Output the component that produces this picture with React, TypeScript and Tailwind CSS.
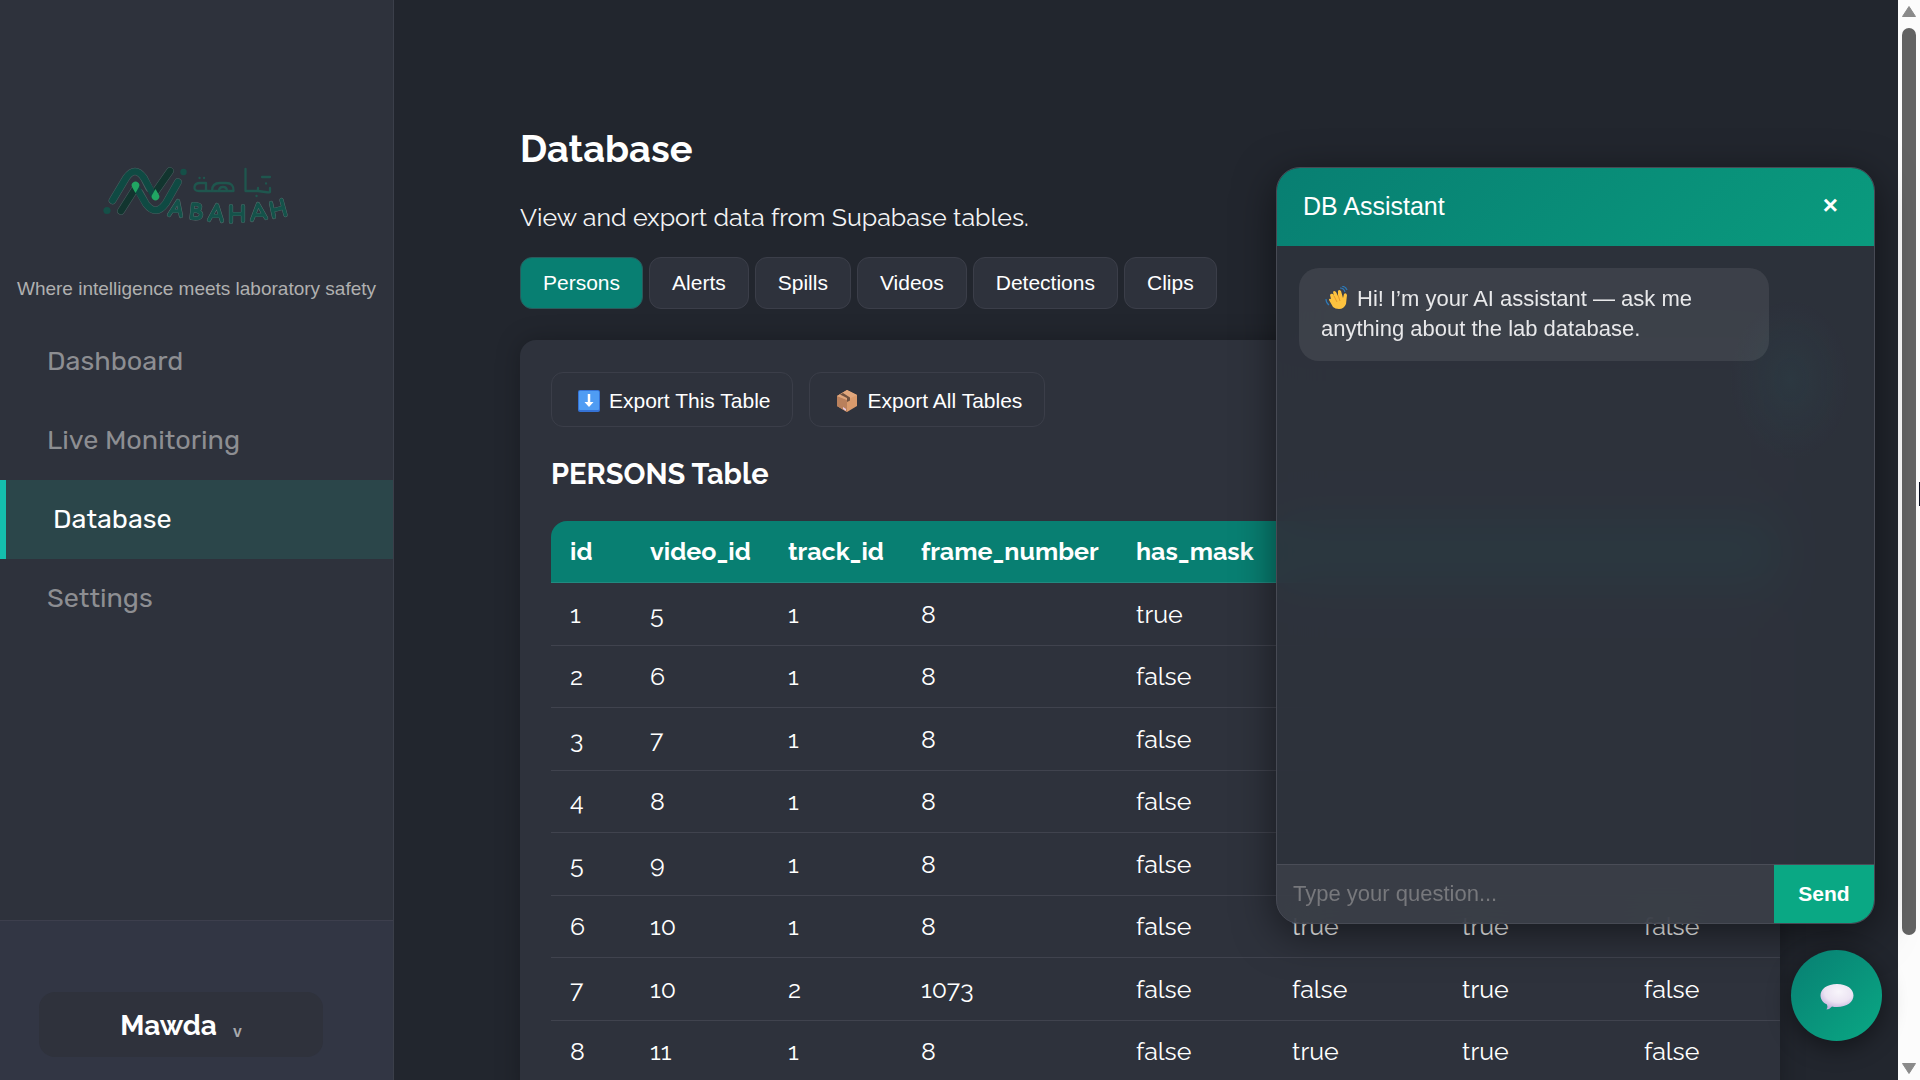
import React from "react";

const navItems = ["Dashboard", "Live Monitoring", "Database", "Settings"];
const tabs = ["Persons", "Alerts", "Spills", "Videos", "Detections", "Clips"];
const columns = ["id", "video_id", "track_id", "frame_number", "has_mask", "", "", ""];
const rows = [
  ["1", "5", "1", "8", "true", "", "", ""],
  ["2", "6", "1", "8", "false", "", "", ""],
  ["3", "7", "1", "8", "false", "", "", ""],
  ["4", "8", "1", "8", "false", "", "", ""],
  ["5", "9", "1", "8", "false", "", "", ""],
  ["6", "10", "1", "8", "false", "true", "true", "false"],
  ["7", "10", "2", "1073", "false", "false", "true", "false"],
  ["8", "11", "1", "8", "false", "true", "true", "false"],
];

function LogoLettering() {
  return (
    <>
      <path d="M79 65 L88 51 L91 66 M83 61 h7" />
      <path d="M101.500 68 L103 54 q8 0 7 3.500 q0 3 -6 3 q8 1 7 5 q-1 4 -9.500 2.500" />
      <path d="M119 70 L127 55 L132 71 M122 66 h8" />
      <path d="M141 56 V72 M153 56 V71 M141 64 h12" />
      <path d="M162 70 L168 54 L176 68 M165 65 h8" />
      <path d="M181 53 L184 67 M191.500 50 L195.500 65 M182.500 60.500 l11 -3" />
    </>
  );
}

function Logo() {
  return (
    <svg viewBox="12 14 190 64" className="h-16 w-[190px]" role="img" aria-label="Nabahah">
      <g fill="none" strokeLinecap="round" strokeLinejoin="round">
        <g stroke="#4b6162" strokeWidth="7.600">
          <path d="M31 61 L45 39" />
          <path d="M66 41 L80 21" />
          <path d="M22.500 50.500 L36 28 Q45 15 54 28 L59 38 M50 43 L56 54 Q66 67 76 53 L88 32" />
        </g>
        <path d="M31 61 L45 39" stroke="#12352f" strokeWidth="6.600" />
        <path d="M66 41 L80 21" stroke="#12352f" strokeWidth="6.600" />
        <path d="M22.500 50.500 L36 28 Q45 15 54 28 L64 46" stroke="#0f4a43" strokeWidth="6.600" />
        <path d="M46 37 L56 54 Q66 67 76 53 L88 32" stroke="#0f4a43" strokeWidth="6.600" />
      </g>
      <circle cx="17" cy="60.500" r="3.600" fill="#155048" />
      <circle cx="93.500" cy="22" r="3.200" fill="#155048" />
      <path d="M45.500 43 L42.300 37.500 A3.800 3.800 0 1 1 48.700 37.500 Z" fill="#21a663" />
      <path d="M65.500 39 L68.700 44.500 A3.800 3.800 0 1 1 62.300 44.500 Z" fill="#21a663" />
      <g fill="none" stroke="#1f564e" strokeWidth="2.300" strokeLinecap="round" strokeLinejoin="round">
        <path d="M143 41 H109 Q104 41 104.500 37 Q105 33 110 33 H116 V41" />
        <path d="M109.500 28 h0.100 M114 28 h0.100" />
        <path d="M122 41 Q122 33 130 33 H136 Q144 33 143.500 41 M129 41 Q129 37 133 37 Q137 37 137 41" />
        <path d="M155.500 19 V41 H168 V38 M166.500 46 h0.100 M168 41 Q180 43 180 42 V38 M176 33.500 h0.100 M172 27 h8" />
      </g>
      <g fill="none" strokeLinecap="round" strokeLinejoin="round">
        <g stroke="#5d7574" strokeWidth="4.200">
          <LogoLettering />
        </g>
        <g stroke="#14524a" strokeWidth="3.400">
          <LogoLettering />
        </g>
      </g>
    </svg>
  );
}

function DownIcon() {
  return (
    <svg viewBox="0 0 22 22" className="size-[22px]" aria-hidden="true">
      <rect width="22" height="22" rx="2" fill="#3573d6" />
      <rect x="1" y="1" width="20" height="19" rx="1" fill="#4f9cf3" />
      <path d="M11 4v11" stroke="#fff" strokeWidth="2.500" fill="none" />
      <path d="M6.500 12 h9 L11 17 Z" fill="#fff" />
    </svg>
  );
}

function BoxIcon() {
  return (
    <svg viewBox="0 0 22 22" className="size-[22px]" aria-hidden="true">
      <path d="M11 0 L21 5 V16 L11 22 L1 16 V6 Z" fill="#d99a6c" />
      <path d="M1 6 L11 10 V22 L1 16 Z" fill="#b9805c" />
      <path d="M11 0 L21 5 L11 10 L1 6 Z" fill="#e0a67c" />
      <path d="M4 4.500 L11 8 V12 L14 10.500 V7.500 L7 3 Z" fill="#70513f" />
      <path d="M7 17 l3 2 v2 l-3 -2 Z" fill="#e6c8e0" />
    </svg>
  );
}

function WaveIcon() {
  return (
    <svg viewBox="0 0 24 24" className="mr-2 ml-1 inline-block size-6 align-[-4px]" aria-hidden="true">
      <path d="M8 21 L4 14 Q4 12 6 13 L5 9 Q6 7 8 8 L9 10 L8 6 Q9 4 11 6 L13 10 L13 5 Q14 3 16 5 L18 12 L19 8 Q21 6 22 9 L21 18 Q19 23 14 23 Q10 23 8 21 Z" fill="#fdc23f" />
      <path d="M9 10 l3 6 M13 9 l2 6" stroke="#e79a2d" fill="none" />
      <path d="M15 2 q4 0 5 4 M17 0 q4 1 5 4 M1 13 q0 4 3 6" stroke="#2d79b8" strokeWidth="1.200" fill="none" />
    </svg>
  );
}

function ChatIcon() {
  return (
    <svg viewBox="0 0 36 28" className="h-7 w-9" aria-hidden="true">
      <defs>
        <radialGradient id="bubble" cx="0.550" cy="0.300" r="0.700">
          <stop offset="0" stopColor="#f8f5fb" />
          <stop offset="0.600" stopColor="#ece4f3" />
          <stop offset="1" stopColor="#c3b0dc" />
        </radialGradient>
      </defs>
      <path d="M18 2 C28 2 34.500 7 34.500 13.500 C34.500 20 28 25 18 25 Q15 25 13 24.500 Q11 27 7.500 27.500 Q9 24 8 22.500 C4 21 1.500 17 1.500 13.500 C1.500 7 8 2 18 2 Z" fill="url(#bubble)" />
    </svg>
  );
}

function Sidebar() {
  return (
    <aside className="flex w-[394px] shrink-0 flex-col border-r border-[#3b3f4a] bg-[#2e323c]">
      <div className="flex flex-col items-center pt-[164px]">
        <Logo />
        <p className="mt-[47px] text-[19px] leading-7 whitespace-nowrap text-[#b0b0b0]">
          Where intelligence meets laboratory safety
        </p>
      </div>
      <nav className="mt-[19px] flex flex-col font-['Rubik','Roboto',sans-serif] text-[27px] leading-[79px]">
        {navItems.map((item) =>
          item === "Database" ? (
            <a key={item} href="#" aria-current="page" className="border-l-[6px] border-[#14bfad] bg-[#2b464a] pl-[47px] text-white">
              {item}
            </a>
          ) : (
            <a key={item} href="#" className="pl-[47px] text-[#8d8e92]">
              {item}
            </a>
          ),
        )}
      </nav>
      <div className="mt-auto h-40 border-t border-[#3d3f4d] bg-[#323644] px-[39px] pt-[71px]">
        <button className="flex h-[65px] w-[284px] items-center justify-center gap-4 rounded-2xl bg-[#2f323c] pt-0.5 font-['Raleway','Lato',sans-serif] text-[28px] font-bold text-white">
          Mawda
          <span className="pt-3 text-base text-[#a8a9ad]">v</span>
        </button>
      </div>
    </aside>
  );
}

function DataTable() {
  return (
    <table className="w-full table-fixed border-collapse text-left text-[25px] text-white">
      <colgroup>
        <col className="w-[80px]" />
        <col className="w-[138px]" />
        <col className="w-[133px]" />
        <col className="w-[215px]" />
        <col className="w-[156px]" />
        <col className="w-[170px]" />
        <col className="w-[182px]" />
        <col />
      </colgroup>
      <thead>
        <tr className="h-[61px] bg-[#087f72]">
          {columns.map((c, i) => (
            <th key={i} scope="col" className="border-b border-[#218a80] pl-[19px] font-bold first:rounded-tl-2xl">
              {c}
            </th>
          ))}
        </tr>
      </thead>
      <tbody>
        {rows.map((r, i) => (
          <tr key={i} className="h-[62px] border-b border-[#40434e] odd:h-[63px]">
            {r.map((v, j) => (
              <td key={j} className="pt-0.5 pl-[19px]">
                {v}
              </td>
            ))}
          </tr>
        ))}
      </tbody>
    </table>
  );
}

function Assistant() {
  return (
    <section className="absolute top-[167px] right-[45px] flex h-[757px] w-[599px] flex-col overflow-hidden rounded-3xl border border-[#474a54] bg-[#2e323c]/92 shadow-[0_10px_40px_rgba(0,0,0,0.5)] backdrop-blur-xl">
      <header className="flex h-[78px] shrink-0 items-center justify-between bg-linear-135 from-[#087f72] to-[#0a9b7e] pr-9 pl-[26px] text-white">
        <h2 className="text-[25px]">DB Assistant</h2>
        <button aria-label="Close" className="pb-1 text-[26px] font-bold">
          ×
        </button>
      </header>
      <div className="grow bg-[radial-gradient(60px_80px_at_513px_134px,#2c3841,transparent)] p-[22px]">
        <p className="w-[470px] rounded-[20px] bg-white/8 px-[22px] pt-4 pb-[17px] text-[22px] leading-[30px] text-[#e8e8ea]">
          <WaveIcon />
          Hi! I’m your AI assistant — ask me anything about the lab database.
        </p>
      </div>
      <form className="flex h-[59px] shrink-0 border-t border-[#4a4d57]">
        <input
          aria-label="Question"
          placeholder="Type your question..."
          className="min-w-0 grow bg-white/6 px-4 pb-0.5 text-[22px] text-white outline-none placeholder:text-[#77787c]"
        />
        <button type="button" className="w-[100px] bg-[#0aa884] text-[21px] font-bold text-white">
          Send
        </button>
      </form>
    </section>
  );
}

function Scrollbar() {
  return (
    <div aria-hidden="true" className="flex w-[22px] shrink-0 flex-col items-center bg-[#fcfcfc] pt-1.5 pb-1.5">
      <svg viewBox="0 0 14 11" className="h-[11px] w-3.5">
        <path d="M7 0.500 L13.500 10.500 H0.500 Z" fill="#8a8a8a" stroke="#8a8a8a" strokeLinejoin="round" />
      </svg>
      <div className="mt-[11px] h-[907px] w-3.5 rounded-full bg-[#636363]" />
      <svg viewBox="0 0 14 11" className="mt-auto h-[11px] w-3.5">
        <path d="M7 10.500 L13.500 0.500 H0.500 Z" fill="#8a8a8a" stroke="#8a8a8a" strokeLinejoin="round" />
      </svg>
    </div>
  );
}

export default function App() {
  return (
    <div className="relative flex h-screen overflow-hidden bg-[#22262e] font-['Liberation_Sans',Arial,sans-serif]">
      <Sidebar />
      <main className="min-w-0 grow overflow-hidden pt-[124px] pr-[118px] pl-[126px] font-['Raleway','Lato',sans-serif]">
        <h1 className="text-[38px] leading-[50px] font-bold text-white">Database</h1>
        <p className="mt-[25px] text-[25px] leading-9 text-[#f4f4f5]">View and export data from Supabase tables.</p>
        <div className="mt-[22px] flex gap-1.5 font-['Liberation_Sans',Arial,sans-serif] text-[21px] text-white">
          {tabs.map((t, i) => (
            <button
              key={t}
              className={
                i === 0
                  ? "h-[52px] rounded-xl border border-[#2b5a5c] bg-[#087f72] px-[22px]"
                  : "h-[52px] rounded-xl border border-[#3b3e49] bg-[#2e323c] px-[22px]"
              }
            >
              {t}
            </button>
          ))}
        </div>
        <div className="mt-[31px] min-h-[760px] rounded-t-2xl bg-[#2e323c] pt-8 pl-[31px] shadow-[0_0_24px_rgba(0,0,0,0.25)]">
          <div className="flex gap-4 font-['Liberation_Sans',Arial,sans-serif] text-[21px] text-white">
            <button className="flex h-[55px] items-center gap-[9px] rounded-xl border border-[#3b3e49] pt-0.5 pr-[22px] pl-[26px]">
              <DownIcon />
              Export This Table
            </button>
            <button className="flex h-[55px] items-center gap-[9px] rounded-xl border border-[#3b3e49] pt-0.5 pr-[22px] pl-[26px]">
              <BoxIcon />
              Export All Tables
            </button>
          </div>
          <h2 className="mt-[27px] mb-[27px] text-[29px] leading-10 font-bold text-white">PERSONS Table</h2>
          <DataTable />
        </div>
      </main>
      <Scrollbar />
      <Assistant />
      <button
        aria-label="Open chat"
        className="absolute top-[950px] right-[38px] flex size-[91px] items-center justify-center rounded-full bg-linear-135 from-[#087f72] to-[#0aa884] shadow-[0_6px_24px_rgba(0,0,0,0.45)]"
      >
        <ChatIcon />
      </button>
      <div aria-hidden="true" className="absolute top-[482px] right-0 h-6 w-px bg-[#0b1020]" />
    </div>
  );
}
